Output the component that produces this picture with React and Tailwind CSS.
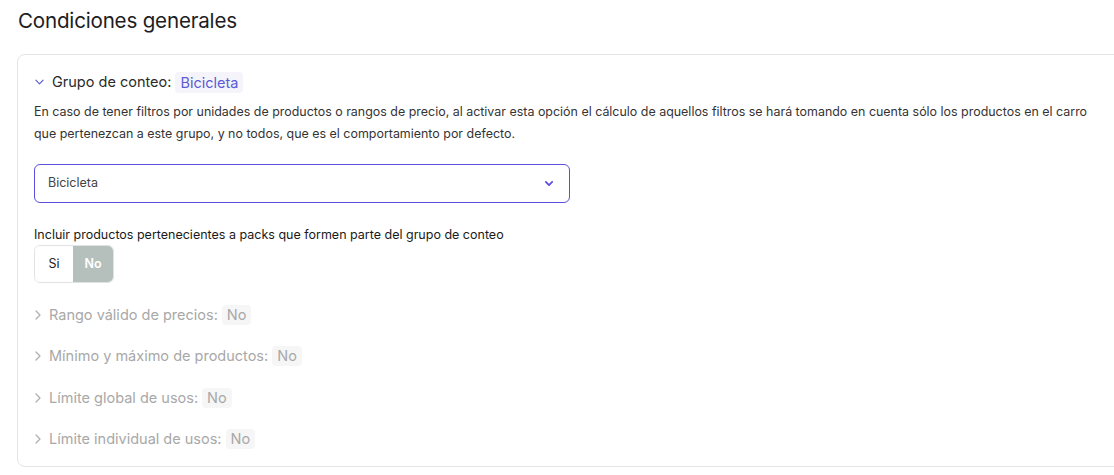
import React from "react";

const font = { fontFamily: "Inter, 'Noto Sans', sans-serif" };

function ChevronDown({ className, sw = 1.3 }) {
  return (
    <svg viewBox="0 0 10 6" className={className} fill="none" stroke="currentColor" strokeWidth={sw} strokeLinecap="round" strokeLinejoin="round">
      <path d="M1 1l4 4 4-4" />
    </svg>
  );
}
function ChevronRight({ className }) {
  return (
    <svg viewBox="0 0 6 10" className={className} fill="none" stroke="currentColor" strokeWidth="1.3" strokeLinecap="round" strokeLinejoin="round">
      <path d="M1 1l4 4-4 4" />
    </svg>
  );
}

function Collapsed({ label }) {
  return (
    <div className="flex items-center h-[41.5px]">
      <ChevronRight className="w-[6px] h-[10px] text-[#b0b0b0] ml-[1px] mr-[8px]" />
      <span className="text-[14.5px] text-[#a8a8a8]">{label}</span>
      <span className="ml-[4px] px-[5px] h-[20px] leading-[20px] rounded-[4px] bg-[#f6f6f7] text-[14.5px] text-[#a8a8a8]">No</span>
    </div>
  );
}

export default function App() {
  return (
    <div className="w-[1114px] h-[475px] overflow-hidden bg-white" style={font}>
      <div className="pl-[18px] pt-[6px] h-[54px]">
        <h1 className="text-[20.6px] leading-[30px] text-[#1d1d1f] font-normal tracking-[-0.2px]">Condiciones generales</h1>
      </div>
      <div className="ml-[17px] mr-[-20px] h-[413px] border border-[#e4e4e6] rounded-[8px] pl-[16px] pt-[15px]">
        <div className="flex items-center h-[24px]">
          <ChevronDown className="w-[9px] h-[6px] text-[#5b5bd6] ml-[1px] mr-[8px]" />
          <span className="text-[14.5px] text-[#2a2a2a]">Grupo de conteo:</span>
          <span className="ml-[4px] px-[5px] h-[21px] leading-[21px] rounded-[4px] bg-[#f4f4fa] text-[14.5px] text-[#5b5bd6]">Bicicleta</span>
        </div>
        <p className="mt-[7px] text-[12.45px] leading-[22px] text-[#333] w-[1070px]">
          En caso de tener filtros por unidades de productos o rangos de precio, al activar esta opción el cálculo de aquellos filtros se hará tomando en cuenta sólo los productos en el carro que pertenezcan a este grupo, y no todos, que es el comportamiento por defecto.
        </p>
        <div className="mt-[19px] w-[536px] h-[39px] border border-[#5b4fe0] rounded-[6px] flex items-center justify-between pl-[13px] pr-[16px]">
          <span className="text-[12.5px] text-[#444]">Bicicleta</span>
          <ChevronDown className="w-[8px] h-[5px] text-[#5b4fe0]" sw={2.2} />
        </div>
        <div className="mt-[23px] text-[12.5px] leading-[18px] text-[#1a1a1a]">Incluir productos pertenecientes a packs que formen parte del grupo de conteo</div>
        <div className="mt-[1px] flex w-[80px] h-[38px] rounded-[6px] border border-[#e2e2e2] overflow-hidden text-[12.5px]">
          <div className="w-[38px] flex items-center justify-center bg-white text-[#222]">Si</div>
          <div className="flex-1 flex items-center justify-center bg-[#b5c0bd] text-white font-semibold">No</div>
        </div>
        <div className="mt-[11px]">
          <Collapsed label="Rango válido de precios:" />
          <Collapsed label="Mínimo y máximo de productos:" />
          <Collapsed label="Límite global de usos:" />
          <Collapsed label="Límite individual de usos:" />
        </div>
      </div>
    </div>
  );
}
